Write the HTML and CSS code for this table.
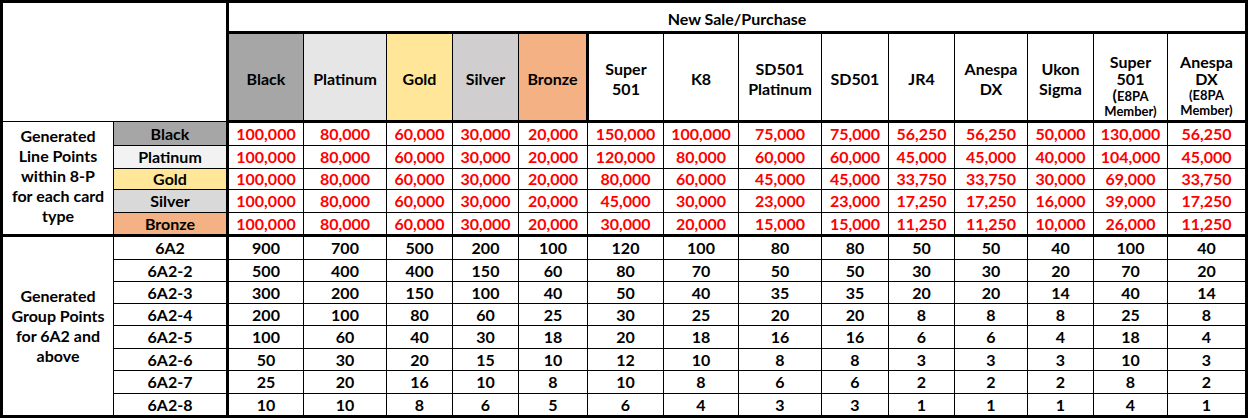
FILE: index.html
```html
<!DOCTYPE html>
<html lang="en">
<head>
<meta charset="utf-8">
<title>Points Table</title>
<link rel="stylesheet" href="styles.css">
</head>
<body>
<table class="grid">
  <colgroup>
    <col class="w-a"><col class="w-b">
    <col class="w-black"><col class="w-plat"><col class="w-gold"><col class="w-silver"><col class="w-bronze">
    <col class="w-super"><col class="w-k8"><col class="w-sdp"><col class="w-sd"><col class="w-jr4">
    <col class="w-anespa"><col class="w-ukon"><col class="w-supere"><col class="w-anespae">
  </colgroup>
  <tr class="r-top">
    <td class="corner" colspan="2" rowspan="2"></td>
    <td class="sale" colspan="14">New Sale/Purchase</td>
  </tr>
  <tr class="r-head">
    <th class="t-black">Black</th>
    <th class="t-plat-h">Platinum</th>
    <th class="t-gold">Gold</th>
    <th class="t-silver-h">Silver</th>
    <th class="t-bronze split">Bronze</th>
    <th>Super<br>501</th>
    <th>K8</th>
    <th>SD501<br>Platinum</th>
    <th>SD501</th>
    <th>JR4</th>
    <th>Anespa<br>DX</th>
    <th>Ukon<br>Sigma</th>
    <th class="member"><span class="ln big">Super</span><span class="ln big">501</span><span class="ln mid">(<span class="small">E8PA</span></span><span class="ln low small">Member)</span></th>
    <th class="member"><span class="ln big">Anespa</span><span class="ln big">DX</span><span class="ln mid small">(E8PA</span><span class="ln low small">Member)</span></th>
  </tr>

  <tr class="h22 line first-line">
    <td class="label clabel" rowspan="5">Generated<br>Line Points<br>within 8-P<br>for each card<br>type</td>
    <td class="tier t-black">Black</td>
    <td>100,000</td><td>80,000</td><td>60,000</td><td>30,000</td><td>20,000</td>
    <td>150,000</td><td>100,000</td><td>75,000</td><td>75,000</td><td>56,250</td><td>56,250</td><td>50,000</td><td>130,000</td><td>56,250</td>
  </tr>
  <tr class="h22 line">
    <td class="tier t-plat">Platinum</td>
    <td>100,000</td><td>80,000</td><td>60,000</td><td>30,000</td><td>20,000</td>
    <td>120,000</td><td>80,000</td><td>60,000</td><td>60,000</td><td>45,000</td><td>45,000</td><td>40,000</td><td>104,000</td><td>45,000</td>
  </tr>
  <tr class="h20 line">
    <td class="tier t-gold">Gold</td>
    <td>100,000</td><td>80,000</td><td>60,000</td><td>30,000</td><td>20,000</td>
    <td>80,000</td><td>60,000</td><td>45,000</td><td>45,000</td><td>33,750</td><td>33,750</td><td>30,000</td><td>69,000</td><td>33,750</td>
  </tr>
  <tr class="h22 line">
    <td class="tier t-silver">Silver</td>
    <td>100,000</td><td>80,000</td><td>60,000</td><td>30,000</td><td>20,000</td>
    <td>45,000</td><td>30,000</td><td>23,000</td><td>23,000</td><td>17,250</td><td>17,250</td><td>16,000</td><td>39,000</td><td>17,250</td>
  </tr>
  <tr class="h21 line">
    <td class="tier t-bronze">Bronze</td>
    <td>100,000</td><td>80,000</td><td>60,000</td><td>30,000</td><td>20,000</td>
    <td>30,000</td><td>20,000</td><td>15,000</td><td>15,000</td><td>11,250</td><td>11,250</td><td>10,000</td><td>26,000</td><td>11,250</td>
  </tr>

  <tr class="h22 group first">
    <td class="label glabel" rowspan="8">Generated<br>Group Points<br>for 6A2 and<br>above</td>
    <td class="tier">6A2</td>
    <td>900</td><td>700</td><td>500</td><td>200</td><td>100</td>
    <td>120</td><td>100</td><td>80</td><td>80</td><td>50</td><td>50</td><td>40</td><td>100</td><td>40</td>
  </tr>
  <tr class="h21 group">
    <td class="tier">6A2-2</td>
    <td>500</td><td>400</td><td>400</td><td>150</td><td>60</td>
    <td>80</td><td>70</td><td>50</td><td>50</td><td>30</td><td>30</td><td>20</td><td>70</td><td>20</td>
  </tr>
  <tr class="h21 group">
    <td class="tier">6A2-3</td>
    <td>300</td><td>200</td><td>150</td><td>100</td><td>40</td>
    <td>50</td><td>40</td><td>35</td><td>35</td><td>20</td><td>20</td><td>14</td><td>40</td><td>14</td>
  </tr>
  <tr class="h21 group">
    <td class="tier">6A2-4</td>
    <td>200</td><td>100</td><td>80</td><td>60</td><td>25</td>
    <td>30</td><td>25</td><td>20</td><td>20</td><td>8</td><td>8</td><td>8</td><td>25</td><td>8</td>
  </tr>
  <tr class="h22 group">
    <td class="tier">6A2-5</td>
    <td>100</td><td>60</td><td>40</td><td>30</td><td>18</td>
    <td>20</td><td>18</td><td>16</td><td>16</td><td>6</td><td>6</td><td>4</td><td>18</td><td>4</td>
  </tr>
  <tr class="h21 group">
    <td class="tier">6A2-6</td>
    <td>50</td><td>30</td><td>20</td><td>15</td><td>10</td>
    <td>12</td><td>10</td><td>8</td><td>8</td><td>3</td><td>3</td><td>3</td><td>10</td><td>3</td>
  </tr>
  <tr class="h22 group">
    <td class="tier">6A2-7</td>
    <td>25</td><td>20</td><td>16</td><td>10</td><td>8</td>
    <td>10</td><td>8</td><td>6</td><td>6</td><td>2</td><td>2</td><td>2</td><td>8</td><td>2</td>
  </tr>
  <tr class="h21 group">
    <td class="tier">6A2-8</td>
    <td>10</td><td>10</td><td>8</td><td>6</td><td>5</td>
    <td>6</td><td>4</td><td>3</td><td>3</td><td>1</td><td>1</td><td>1</td><td>4</td><td>1</td>
  </tr>
</table>
</body>
</html>
```

FILE: styles.css
```css
html, body {
  margin: 0;
  padding: 0;
  background: #ffffff;
}

.grid {
  border-collapse: collapse;
  table-layout: fixed;
  width: 1248px;
  border: 3px solid #000;
  font-family: Lato, "Liberation Sans", sans-serif;
  font-weight: 700;
  font-size: 16px;
  color: #000;
}

.w-a { width: 112px; }
.w-b { width: 114px; }
.w-black { width: 76px; }
.w-plat { width: 83px; }
.w-gold { width: 66px; }
.w-silver { width: 66px; }
.w-bronze { width: 69px; }
.w-super { width: 76px; }
.w-k8 { width: 75px; }
.w-sdp { width: 83px; }
.w-sd { width: 67px; }
.w-jr4 { width: 66px; }
.w-anespa { width: 73px; }
.w-ukon { width: 66px; }
.w-supere { width: 74px; }
.w-anespae { width: 79px; }

.grid td,
.grid th {
  border: 1px solid #000;
  padding: 0;
  text-align: center;
  vertical-align: middle;
  font-weight: 700;
  line-height: 20px;
  white-space: nowrap;
}

.r-top td {
  height: 24px;
  padding-top: 4px;
}

.corner {
  border-right: 3px solid #000 !important;
}

.sale {
  border-bottom: 3px solid #000 !important;
}

.r-head th {
  height: 82px;
  padding-top: 4px;
  border-bottom: 3px solid #000;
}

.r-head th.split {
  border-right: 3px solid #000;
}

.r-head th.member {
  height: 67px;
  padding-top: 19px;
  vertical-align: top;
  line-height: 16px;
}

.ln {
  display: block;
}

.ln.big { line-height: 17px; }
.ln.mid { line-height: 16px; }
.ln.low { line-height: 15px; }

.small {
  font-size: 13px;
}

.h20 td { height: 20px; }
.h21 td { height: 21px; }
.h22 td { height: 22px; }

.line td { color: #ff0000; }
.line td.label,
.line td.tier { color: #000; }

.label {
  line-height: 20px;
}

.clabel {
  padding-bottom: 5px !important;
}

.glabel {
  line-height: 21px;
}

.tier {
  border-right: 3px solid #000 !important;
}

.group.first td {
  border-top: 3px solid #000;
}

.t-black { background: #a6a6a6; }
.t-plat-h { background: #e7e6e6; }
.t-plat { background: #f2f2f2; }
.t-gold { background: #ffe699; }
.t-silver-h { background: #d0cece; }
.t-silver { background: #d9d9d9; }
.t-bronze { background: #f4b183; }
```
